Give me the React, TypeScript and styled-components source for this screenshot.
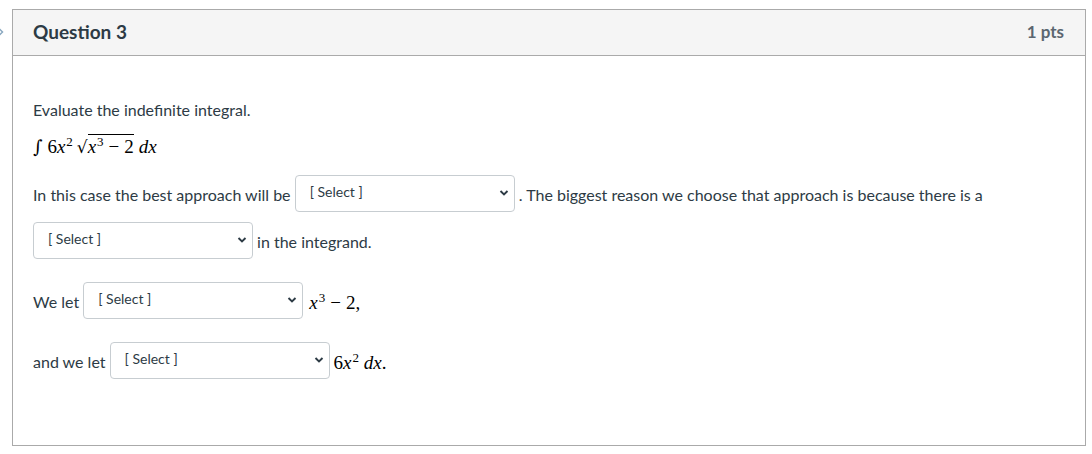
import React from "react";
import styled, { createGlobalStyle } from "styled-components";

const Global = createGlobalStyle`
  html, body { margin: 0; padding: 0; background: #ffffff; }
  body { font-family: Lato, "Open Sans", "Liberation Sans", sans-serif; color: #2d3b45; }
`;

const Page = styled.div`
  display: flex;
  align-items: flex-start;
  width: 1092px;
  height: 454px;
  overflow: hidden;
`;

const Gutter = styled.div`
  width: 12px;
  flex: none;
  padding-top: 26px;
  overflow: visible;
`;

const Marker = styled.svg`
  display: block;
  margin-left: -5px;
`;

const Card = styled.section`
  flex: none;
  width: 1072px;
  margin-top: 9px;
  border: 1px solid #aaaaaa;
  background: #ffffff;
`;

const Header = styled.header`
  display: flex;
  align-items: center;
  justify-content: space-between;
  height: 45px;
  padding: 0 20px;
  background: #f5f5f5;
  border-bottom: 1px solid #aaaaaa;
`;

const Title = styled.h2`
  margin: 0;
  font-size: 19px;
  font-weight: 700;
  color: #2d3b45;
  margin-top: -2px;
`;

const Points = styled.span`
  font-size: 17px;
  font-weight: 700;
  color: #5b6670;
  margin-right: 1px;
  margin-top: -2px;
`;

const Body = styled.div`
  padding: 42px 20px 67px 20px;
  font-size: 16px;
  line-height: 24px;
`;

const Para = styled.p`
  margin: 0;
`;

const MathLine = styled.div`
  margin-top: 13px;
  height: 24px;
  display: flex;
  align-items: center;
`;

const Row = styled.div<{ $gap: number }>`
  display: flex;
  align-items: center;
  margin-top: ${(p) => p.$gap}px;
  height: 36px;
`;

const Text = styled.span`
  white-space: pre;
  padding-top: 4px;
`;

const SelectBox = styled.div`
  box-sizing: border-box;
  width: 220px;
  height: 37px;
  display: flex;
  align-items: center;
  justify-content: space-between;
  padding: 0 5px 3px 14px;
  border: 1px solid #c7cdd1;
  border-radius: 4px;
  background: #ffffff;
  font-size: 14px;
  color: #2d3b45;
`;

const Chevron = styled.svg`
  flex: none;
  margin-top: 3px;
`;

const M = styled.span<{ $lead?: number; $drop?: number }>`
  font-family: "Liberation Serif", "DejaVu Serif", serif;
  font-size: 19px;
  white-space: pre;
  color: #000000;
  margin-left: ${(p) => p.$lead ?? 0}px;
  padding-top: ${(p) => p.$drop ?? 0}px;
`;

const MI = styled.i`
  font-style: italic;
`;

const Sup = styled.sup`
  font-size: 13px;
  line-height: 0;
  vertical-align: 7px;
  font-style: normal;
  margin-left: 1px;
`;

const Op = styled.span`
  margin: 0 5px;
`;

const Integral = styled.span`
  font-family: "DejaVu Serif", "Liberation Serif", serif;
  font-size: 18px;
  font-style: italic;
  margin-right: 5px;
`;

const Radical = styled.span`
  font-family: "DejaVu Sans", "Liberation Serif", serif;
  font-size: 17px;
  margin-left: 4px;
`;

const Vinculum = styled.span`
  border-top: 1px solid #000;
  padding-top: 1px;
  margin-right: 5px;
`;

const Select = () => (
  <SelectBox>
    <span>[ Select ]</span>
    <Chevron width="10" height="8" viewBox="0 0 10 8">
      <path d="M1.5 2 L5 5.5 L8.5 2" fill="none" stroke="#2d3b45" strokeWidth="1.9" />
    </Chevron>
  </SelectBox>
);

export default function App() {
  return (
    <>
      <Global />
      <Page>
        <Gutter>
          <Marker width="10" height="12" viewBox="0 0 10 12">
            <path d="M3 1.5 L7.5 6 L3 10.5" fill="none" stroke="#8aa8c0" strokeWidth="1.5" />
          </Marker>
        </Gutter>
        <Card>
          <Header>
            <Title>Question 3</Title>
            <Points>1 pts</Points>
          </Header>
          <Body>
            <Para>Evaluate the indefinite integral.</Para>
            <MathLine>
              <M>
                <Integral>∫</Integral>6<MI>x</MI>
                <Sup>2</Sup>
                <Radical>√</Radical>
                <Vinculum>
                  <MI>x</MI>
                  <Sup>3</Sup>
                  <Op>−</Op>2
                </Vinculum>
                <MI>dx</MI>
              </M>
            </MathLine>
            <Row $gap={16}>
              <Text>In this case the best approach will be </Text>
              <Select />
              <Text> . The biggest reason we choose that approach is because there is a</Text>
            </Row>
            <Row $gap={11}>
              <Select />
              <Text> in the integrand.</Text>
            </Row>
            <Row $gap={24}>
              <Text>We let </Text>
              <Select />
              <M $lead={6} $drop={5}>
                <MI>x</MI>
                <Sup>3</Sup>
                <Op>−</Op>2,
              </M>
            </Row>
            <Row $gap={24}>
              <Text>and we let </Text>
              <Select />
              <M $lead={4} $drop={5}>
                6<MI>x</MI>
                <Sup>2</Sup> <MI>dx</MI>.
              </M>
            </Row>
          </Body>
        </Card>
      </Page>
    </>
  );
}
